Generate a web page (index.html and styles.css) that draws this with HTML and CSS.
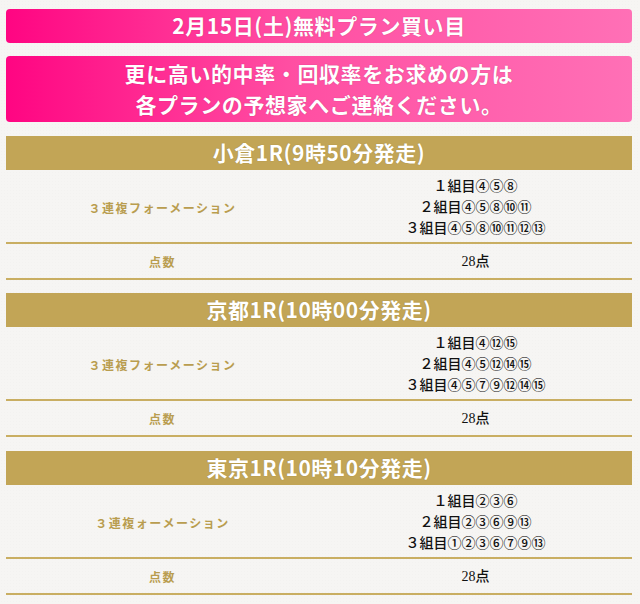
FILE: index.html
```html
<!DOCTYPE html>
<html lang="ja">
<head>
<meta charset="utf-8">
<link rel="stylesheet" href="styles.css">
</head>
<body>
<div class="page">
  <div class="banner banner-title">2月15日(土)無料プラン買い目</div>
  <div class="banner banner-msg">更に高い的中率・回収率をお求めの方は<br>各プランの予想家へご連絡ください。</div>

  <section class="race">
    <h2 class="race-head">小倉1R(9時50分発走)</h2>
    <div class="row row-tall">
      <div class="label">３連複フォーメーション</div>
      <div class="value">１組目④⑤⑧<br>２組目④⑤⑧⑩⑪<br>３組目④⑤⑧⑩⑪⑫⑬</div>
    </div>
    <div class="row">
      <div class="label">点数</div>
      <div class="value">28点</div>
    </div>
  </section>

  <section class="race">
    <h2 class="race-head">京都1R(10時00分発走)</h2>
    <div class="row row-tall">
      <div class="label">３連複フォーメーション</div>
      <div class="value">１組目④⑫⑮<br>２組目④⑤⑫⑭⑮<br>３組目④⑤⑦⑨⑫⑭⑮</div>
    </div>
    <div class="row">
      <div class="label">点数</div>
      <div class="value">28点</div>
    </div>
  </section>

  <section class="race">
    <h2 class="race-head">東京1R(10時10分発走)</h2>
    <div class="row row-tall">
      <div class="label">３連複ォーメーション</div>
      <div class="value">１組目②③⑥<br>２組目②③⑥⑨⑬<br>３組目①②③⑥⑦⑨⑬</div>
    </div>
    <div class="row">
      <div class="label">点数</div>
      <div class="value">28点</div>
    </div>
  </section>
</div>
</body>
</html>
```

FILE: styles.css
```css
html, body {
  margin: 0;
  padding: 0;
}
body {
  background-color: #f6f5f3;
  background-image: radial-gradient(rgba(0,0,0,0.012) 1px, transparent 1px);
  background-size: 3px 3px;
  width: 640px;
  height: 604px;
  overflow: hidden;
}
.page {
  padding: 9px 8px 0 6px;
  font-family: "Noto Sans CJK JP", sans-serif;
}
.banner {
  background: linear-gradient(to right, #ff0582 0%, #ff4ea2 45%, #ff70b6 100%);
  border-radius: 4px;
  color: #fff;
  font-weight: 700;
  font-size: 21px;
  text-align: center;
  text-shadow: 0 0 1px rgba(150,0,60,0.5);
  letter-spacing: 0.6px;
}
.banner-title {
  height: 34px;
  line-height: 33px;
  margin-bottom: 13px;
}
.banner-msg {
  line-height: 31px;
  padding: 2px 0 2px;
  margin-bottom: 14px;
}
.race {
  margin-bottom: 13px;
}
.race + .race {
  margin-bottom: 14px;
}
.race-head {
  margin: 0;
  height: 34px;
  line-height: 33px;
  background: #c2a556;
  color: #fff;
  font-size: 21px;
  font-weight: 700;
  letter-spacing: 0.5px;
  text-align: center;
  text-shadow: 0 0 1px rgba(90,70,10,0.4);
}
.row {
  display: grid;
  grid-template-columns: 1fr 1fr;
  align-items: center;
  height: 34px;
  border-bottom: 2px solid #c9ae62;
  text-align: center;
}
.row-tall {
  height: 72px;
  padding-top: 2px;
  box-sizing: border-box;
  height: 74px;
}
.label {
  color: #b99d4f;
  font-size: 12px;
  font-weight: 700;
  letter-spacing: 1.5px;
}
.value {
  color: #111;
  font-size: 14px;
  font-weight: 500;
  line-height: 21px;
  font-family: "Liberation Serif", "Noto Sans CJK JP", serif;
}
```
